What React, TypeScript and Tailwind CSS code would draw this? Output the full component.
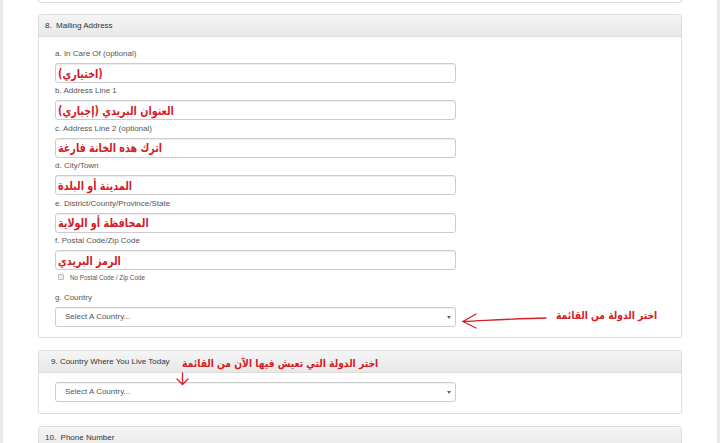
import React from 'react';

type FieldProps = {
  label: string;
  value: string;
};

function Field({ label, value }: FieldProps) {
  return (
    <div className="mb-[2.4px]">
      <div className="h-[12px] text-[8px] leading-[12px] text-[#555]">{label}</div>
      <div className="mt-[3px] flex h-[20px] items-center overflow-hidden rounded-[3px] border border-[#ccc] bg-white px-[2px] shadow-[inset_0_1px_1px_rgba(0,0,0,0.075)]">
        <span
          dir="rtl"
          className="inline-block origin-center scale-y-[1.25] whitespace-nowrap pt-[1px] font-['DejaVu_Sans',sans-serif] text-[9.6px] font-bold leading-none text-[#d42027]"
        >
          {value}
        </span>
      </div>
    </div>
  );
}

function CountrySelect() {
  return (
    <div className="flex h-[20px] items-center justify-between rounded-[3px] border border-[#ccc] bg-white pl-[9px] pr-[4px] text-[8px] text-[#555] shadow-[inset_0_1px_1px_rgba(0,0,0,0.05)]">
      <span>Select A Country...</span>
      <span className="h-0 w-0 border-x-[2px] border-t-[3px] border-x-transparent border-t-[#666]" />
    </div>
  );
}

function PanelHeader({ children, className = '' }: { children: React.ReactNode; className?: string }) {
  return (
    <div
      className={`flex h-[22px] items-center rounded-t-[3px] border-b border-[#ddd] bg-gradient-to-b from-[#f5f5f5] to-[#e8e8e8] text-[8px] text-[#333] ${className}`}
    >
      {children}
    </div>
  );
}

export default function App() {
  return (
    <div className="flex h-[443px] w-[720px] overflow-hidden bg-[#e9e9e9] px-[3px] font-['Liberation_Sans',Arial,sans-serif]">
      <div className="relative flex-1 bg-white px-[35px]">
        {/* end of previous panel */}
        <div className="h-[3px] rounded-b-[3px] border-x border-b border-[#ddd]" />

        {/* 8. Mailing Address */}
        <div className="mt-[11px] rounded-[3px] border border-[#ddd] bg-white">
          <PanelHeader className="pl-[6px]">8.&nbsp; Mailing Address</PanelHeader>
          <div className="w-[433px] pb-[10px] pl-[16px] pr-[16px] pt-[11px]">
            <Field label="a. In Care Of (optional)" value="(اختياري)" />
            <Field label="b. Address Line 1" value="العنوان البريدي (إجباري)" />
            <Field label="c. Address Line 2 (optional)" value="اترك هذه الخانة فارغة" />
            <Field label="d. City/Town" value="المدينة أو البلدة" />
            <Field label="e. District/County/Province/State" value="المحافظة أو الولاية" />
            <Field label="f. Postal Code/Zip Code" value="الرمز البريدي" />
            <div className="flex h-[10px] items-center pl-[3px]">
              <span className="h-[6px] w-[6px] rounded-[1px] border border-[#bbb] bg-[#f0f0f0]" />
              <span className="ml-[6px] text-[6.3px] text-[#555]">No Postal Code / Zip Code</span>
            </div>
            <div className="mt-[10px] h-[12px] text-[8px] leading-[12px] text-[#555]">g. Country</div>
            <div className="mt-[3px]">
              <CountrySelect />
            </div>
          </div>
        </div>

        {/* 9. Country Where You Live Today */}
        <div className="mt-[12px] rounded-[3px] border border-[#ddd] bg-white">
          <PanelHeader className="pl-[12px] text-[7.7px]">9. Country Where You Live Today</PanelHeader>
          <div className="w-[433px] pb-[11px] pl-[16px] pr-[16px] pt-[9px]">
            <CountrySelect />
          </div>
        </div>

        {/* 10. Phone Number */}
        <div className="mt-[12px] rounded-[3px] border border-[#ddd] bg-white">
          <PanelHeader className="pl-[6px]">10.&nbsp; Phone Number</PanelHeader>
          <div className="h-[40px]" />
        </div>

        {/* hand-drawn annotations */}
        <div
          dir="rtl"
          className="absolute left-[553px] top-[310px] origin-center scale-y-[1.2] whitespace-nowrap font-['DejaVu_Sans',sans-serif] text-[9.2px] font-bold leading-none text-[#d42027]"
        >
          اختر الدولة من القائمة
        </div>
        <div
          dir="rtl"
          className="absolute left-[179px] top-[358px] origin-center scale-y-[1.2] whitespace-nowrap font-['DejaVu_Sans',sans-serif] text-[9.2px] font-bold leading-none text-[#d42027]"
        >
          اختر الدولة التي تعيش فيها الآن من القائمة
        </div>
        <svg
          className="pointer-events-none absolute left-[-3px] top-0"
          width="720"
          height="443"
          viewBox="0 0 720 443"
          fill="none"
          stroke="#d42027"
          strokeWidth="1.3"
          strokeLinecap="round"
          strokeLinejoin="round"
        >
          <path d="M546 318 C 520 318.5, 495 320, 463 321.5" />
          <path d="M476 314 L463 321.5 L476 328" />
          <path d="M182.5 373 L182.5 384" />
          <path d="M177 379 L182.5 384.5 L188 379" />
        </svg>
      </div>
    </div>
  );
}
